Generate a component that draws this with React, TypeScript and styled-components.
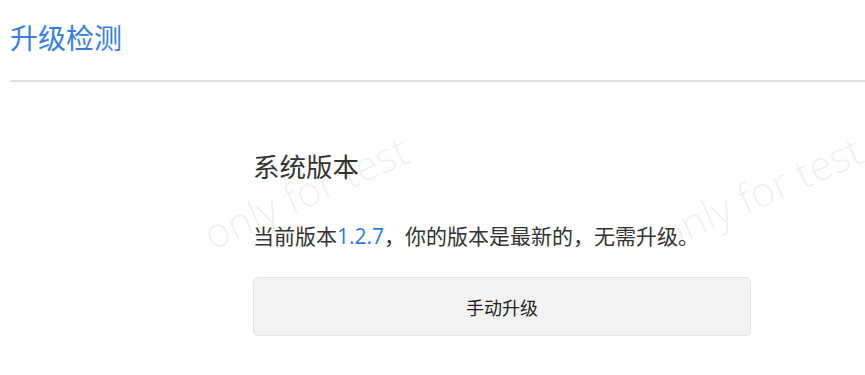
import React from "react";
import styled, { createGlobalStyle } from "styled-components";

const GlobalStyle = createGlobalStyle`
  html, body {
    margin: 0;
    padding: 0;
    background: #ffffff;
  }
  body {
    font-family: "Noto Sans", "Noto Sans CJK SC", sans-serif;
    color: #333333;
  }
`;

const Page = styled.div`
  position: relative;
  width: 865px;
  height: 375px;
  overflow: hidden;
  background: #ffffff;
`;

const Header = styled.div`
  margin-left: 10px;
  height: 82px;
  display: flex;
  align-items: center;
  border-bottom: 2px solid #dfdfdf;
  box-sizing: border-box;
`;

const Title = styled.h1`
  margin: 0;
  padding-bottom: 6px;
  font-family: "Noto Sans CJK SC", sans-serif;
  font-weight: 400;
  font-size: 28px;
  line-height: 1;
  color: #3b7ed6;
`;

const Content = styled.div`
  margin-left: 253px;
  width: 498px;
  padding-top: 67px;
  display: flex;
  flex-direction: column;
`;

const SectionTitle = styled.h2`
  margin: 0;
  font-family: "Noto Sans CJK SC", sans-serif;
  font-weight: 400;
  font-size: 26.5px;
  line-height: 34px;
  color: #333333;
`;

const Info = styled.p`
  margin: 39px 0 0;
  font-family: "Noto Sans CJK SC", sans-serif;
  font-size: 21px;
  line-height: 26px;
  color: #333333;
`;

const Version = styled.span`
  font-family: "Open Sans", "Noto Sans", sans-serif;
  color: #2f7ad8;
`;

const UpgradeButton = styled.button`
  margin-top: 28px;
  width: 498px;
  height: 59px;
  background: #f2f2f2;
  border: 1px solid #e3e3e3;
  border-radius: 5px;
  font-family: "Noto Sans CJK SC", sans-serif;
  font-size: 18px;
  color: #222222;
  cursor: pointer;
`;

const Watermark = styled.div<{ $left: number; $top: number }>`
  position: absolute;
  left: ${(p) => p.$left}px;
  top: ${(p) => p.$top}px;
  transform: rotate(-24deg);
  transform-origin: left bottom;
  font-family: "Open Sans", sans-serif;
  font-weight: 300;
  font-size: 41px;
  line-height: 1;
  color: rgba(0, 0, 0, 0.08);
  white-space: nowrap;
  pointer-events: none;
  user-select: none;
`;

export default function App() {
  return (
    <Page>
      <GlobalStyle />
      <Header>
        <Title>升级检测</Title>
      </Header>
      <Content>
        <SectionTitle>系统版本</SectionTitle>
        <Info>
          当前版本<Version>1.2.7</Version>，你的版本是最新的，无需升级。
        </Info>
        <UpgradeButton type="button">手动升级</UpgradeButton>
      </Content>
      <Watermark $left={214} $top={214}>only for test</Watermark>
      <Watermark $left={668} $top={214}>only for test</Watermark>
    </Page>
  );
}
